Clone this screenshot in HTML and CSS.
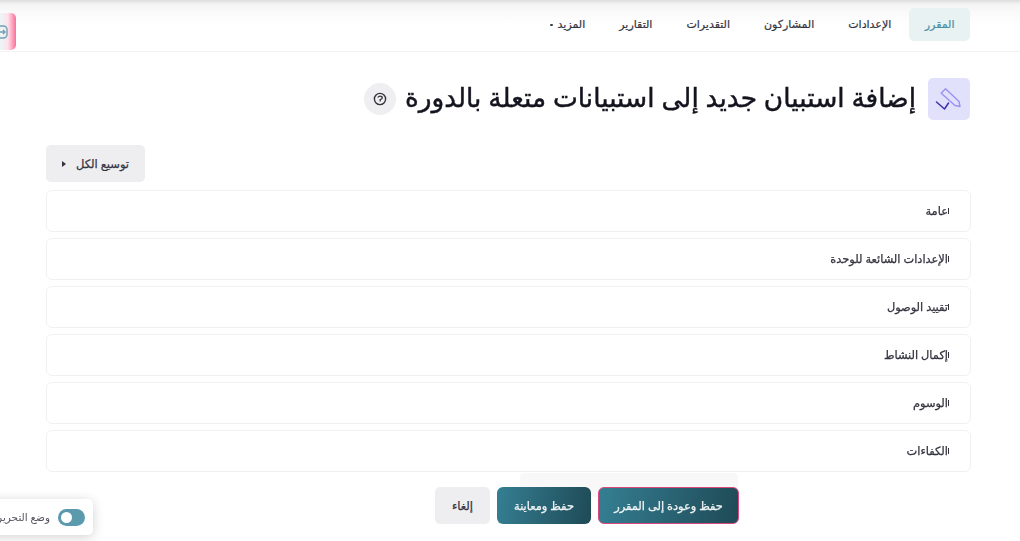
FILE: index.html
```html
<!DOCTYPE html>
<html lang="ar" dir="rtl">
<head>
<meta charset="utf-8">
<title>إضافة استبيان جديد</title>
<link rel="stylesheet" href="styles.css">
</head>
<body>
<div class="page">
  <nav class="nav">
    <a class="tab tab-active">المقرر</a>
    <a class="tab">الإعدادات</a>
    <a class="tab">المشاركون</a>
    <a class="tab">التقديرات</a>
    <a class="tab">التقارير</a>
    <a class="tab">المزيد <span class="caret"></span></a>
  </nav>
  <main class="main">
    <header class="head">
      <span class="head-icon">
        <svg class="pen" width="24" height="24" viewBox="0 0 24 24" fill="none" stroke-linecap="round" stroke-linejoin="round">
          <path d="M4.2 6.3 L8.5 1.8 L22 14.5 L23 19.5 L18 18.5 Z" stroke="#9a91f3" stroke-width="1.4"/>
          <path d="M-0.5 15 L7.5 22 L11.5 16" stroke="#3d2fb0" stroke-width="1.5"/>
        </svg>
      </span>
      <h1 class="title">إضافة استبيان جديد إلى استبيانات متعلة بالدورة</h1>
      <span class="help">
        <svg width="14" height="14" viewBox="0 0 14 14" fill="none" stroke="#33333a">
          <circle cx="7" cy="7" r="5.6" stroke-width="1.4"/>
          <path d="M4.6 5.4 Q7 3 9.2 5 Q9.6 7 7.2 7.6 L7.2 9.4" stroke-width="1.3"/>
        </svg>
      </span>
    </header>
    <div class="expand-row">
      <button class="btn-grey expand">توسيع الكل <span class="expand-arrow"></span></button>
    </div>
    <section class="cards">
      <div class="card"><span class="mark"></span>عامة</div>
      <div class="card"><span class="mark"></span>الإعدادات الشائعة للوحدة</div>
      <div class="card"><span class="mark"></span>تقييد الوصول</div>
      <div class="card"><span class="mark"></span>إكمال النشاط</div>
      <div class="card"><span class="mark"></span>الوسوم</div>
      <div class="card"><span class="mark"></span>الكفاءات</div>
    </section>
    <div class="actions">
      <span class="ghost"></span>
      <button class="btn-main btn-outlined">حفظ وعودة إلى المقرر</button>
      <button class="btn-main">حفظ ومعاينة</button>
      <button class="btn-grey cancel">إلغاء</button>
    </div>
  </main>
  <div class="side-tab">
    <svg width="14" height="16" viewBox="0 0 14 16" fill="none" stroke="#6fa3b2" stroke-width="1.4">
      <rect x="1" y="2" width="11" height="12" rx="3.5"/>
      <path d="M5 8H9.5M8 6l2 2-2 2"/>
    </svg>
  </div>
  <div class="edit-mode">
    <span class="toggle"><span class="knob"></span></span>
    <span class="edit-label">وضع التحرير</span>
  </div>
</div>
</body>
</html>
```
FILE: styles.css
```css
* { box-sizing: border-box; }
html, body { margin: 0; height: 100%; }
body {
  background: #fff;
  color: #1d1d2b;
  font-family: "Noto Sans", "DejaVu Sans", "Liberation Sans", sans-serif;
  overflow: hidden;
}
.page {
  position: relative;
  width: 1020px;
  height: 541px;
  overflow: hidden;
  filter: blur(0.4px);
}
.nav {
  display: flex;
  align-items: flex-start;
  gap: 2px;
  height: 52px;
  padding: 8px 50px 0 0;
  border-bottom: 1px solid #f2f2f3;
  background: linear-gradient(#dcdcde 0, #f3f3f4 4px, #fafafa 12px, #fff 26px);
}
.tab {
  height: 33px;
  padding: 0 16px;
  border-radius: 5px;
  font-size: 11px;
  line-height: 32px;
  color: #33333f;
  -webkit-text-stroke: 0.2px #33333f;
  white-space: nowrap;
}
.tab-active {
  padding: 0 15.5px;
  background: #e8f2f3;
  color: #4a8fa3;
  -webkit-text-stroke: 0.2px #4a8fa3;
}
.caret {
  display: inline-block;
  width: 3px;
  height: 2px;
  margin-right: 2px;
  background: #3b3b47;
  border-radius: 1px;
  vertical-align: middle;
}
.main { padding: 26px 50px 0 46px; }
.head {
  display: flex;
  align-items: center;
  height: 42px;
  gap: 12px;
}
.head-icon {
  display: flex;
  align-items: center;
  justify-content: center;
  width: 42px;
  height: 42px;
  border-radius: 5px;
  background: #e2e1fb;
}
.pen { overflow: visible; }
.title {
  margin: 0 0 3px;
  font-size: 26.4px;
  font-weight: 400;
  line-height: 39px;
  color: #14141f;
  -webkit-text-stroke: 0.45px #14141f;
  white-space: nowrap;
}
.help {
  display: flex;
  align-items: center;
  justify-content: center;
  width: 32px;
  height: 32px;
  margin-right: -3px;
  border-radius: 50%;
  background: #efeff1;
}
.expand-row {
  display: flex;
  justify-content: flex-end;
  margin-top: 25px;
}
.btn-grey {
  border: 0;
  border-radius: 5px;
  background: #eeeef0;
  color: #33333f;
  font: inherit;
  font-size: 11.5px;
  -webkit-text-stroke: 0.25px #33333f;
}
.expand {
  display: flex;
  align-items: center;
  justify-content: center;
  gap: 10px;
  width: 99px;
  height: 37px;
  padding: 0;
}
.expand-arrow {
  width: 0;
  height: 0;
  border-top: 3px solid transparent;
  border-bottom: 3px solid transparent;
  border-left: 4px solid #33333f;
}
.cards {
  display: flex;
  flex-direction: column;
  gap: 6px;
  margin: 8px -1px 0 0;
}
.card {
  position: relative;
  height: 42px;
  padding-right: 22px;
  border: 1.5px solid #f0f0f2;
  border-radius: 6px;
  font-size: 11.4px;
  line-height: 39px;
  color: #33333f;
  -webkit-text-stroke: 0.25px #33333f;
}
.mark {
  position: absolute;
  right: 21px;
  top: 17px;
  width: 3px;
  height: 6px;
  border-right: 1.5px solid #33333f;
}
.actions {
  position: relative;
  display: flex;
  align-items: center;
  gap: 7px;
  height: 37px;
  margin-top: 15px;
  padding-right: 231px;
}
.ghost {
  position: absolute;
  right: 232px;
  top: -14px;
  width: 218px;
  height: 24px;
  border-radius: 4px;
  background: #f8f8f9;
}
.btn-main {
  position: relative;
  height: 37px;
  padding: 0;
  width: 94px;
  border: 0;
  border-radius: 6px;
  background: linear-gradient(100deg, #357f93, #1f4a56);
  color: #f2f5f6;
  font: inherit;
  font-size: 11.4px;
  -webkit-text-stroke: 0.25px #f2f5f6;
}
.btn-outlined {
  width: 141px;
  border: 1.5px solid #d9487d;
}
.cancel { width: 55px; height: 37px; }
.side-tab {
  position: absolute;
  left: 0;
  top: 13px;
  display: flex;
  align-items: center;
  justify-content: flex-end;
  width: 16px;
  height: 37px;
  overflow: hidden;
  border-radius: 0 5px 5px 0;
  background: linear-gradient(90deg, #eef3f5 10%, #ffe0e8 50%, #fb6f9b 100%);
}
.side-tab svg { flex: none; margin-left: -5px; }
.edit-mode {
  position: absolute;
  left: -24px;
  top: 499px;
  display: flex;
  align-items: center;
  gap: 8px;
  width: 117px;
  height: 36px;
  padding-right: 8px;
  border-radius: 5px;
  background: #fff;
  box-shadow: 0 2px 12px rgba(0, 0, 0, .18);
  white-space: nowrap;
}
.toggle {
  position: relative;
  flex: none;
  width: 27px;
  height: 17px;
  border-radius: 9px;
  background: #5a9aac;
}
.knob {
  position: absolute;
  left: 3px;
  top: 3px;
  width: 11px;
  height: 11px;
  border-radius: 50%;
  background: #fff;
}
.edit-label { font-size: 10.5px; color: #55555f; }
```
